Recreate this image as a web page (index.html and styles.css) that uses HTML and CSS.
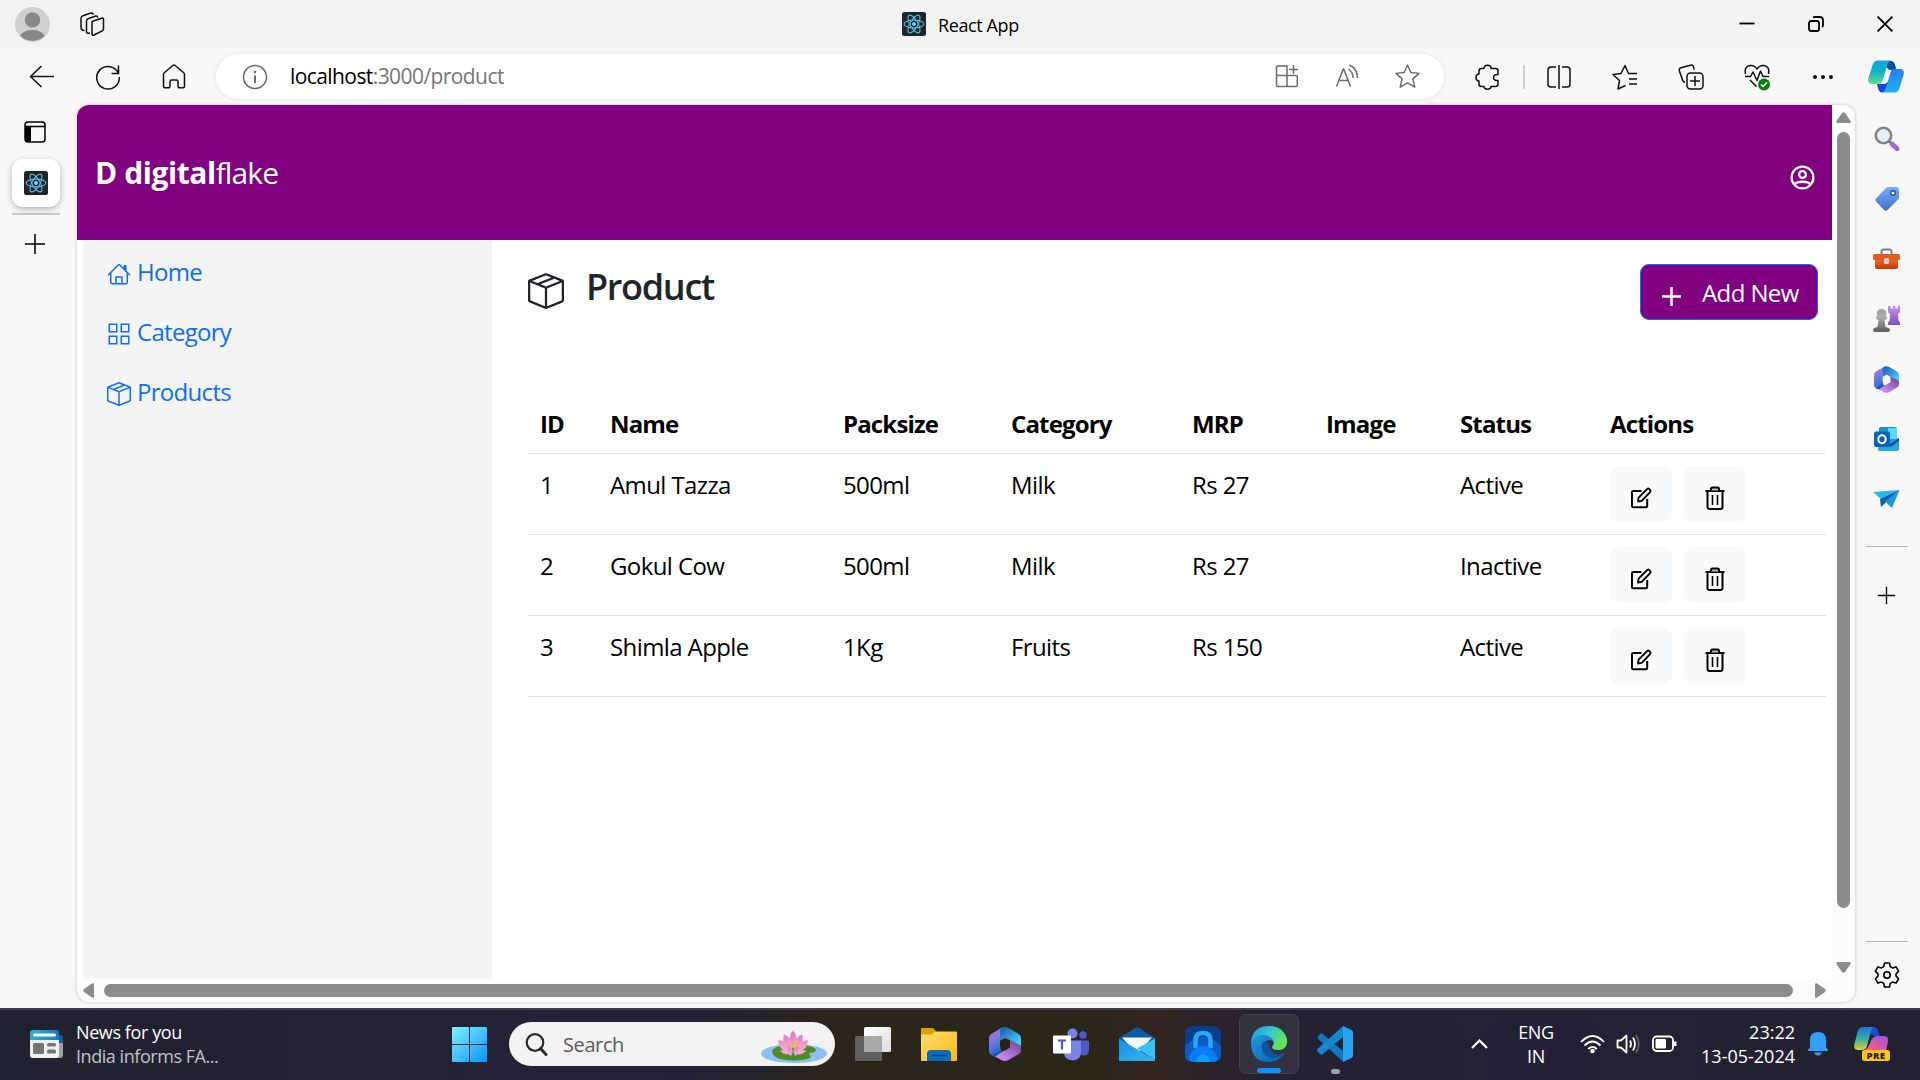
FILE: index.html
```html
<!DOCTYPE html>
<html lang="en">
<head>
<meta charset="utf-8">
<title>React App</title>
<link rel="stylesheet" href="styles.css">
</head>
<body>
<svg class="defs" width="0" height="0">
  <defs>
    <linearGradient id="g-win" x1="0" y1="0" x2="1" y2="1"><stop offset="0" stop-color="#7df3ff"/><stop offset="1" stop-color="#0a93ff"/></linearGradient>
    <linearGradient id="g-a" x1="0" y1="0" x2="0" y2="1"><stop offset="0" stop-color="#0aa5e8"/><stop offset=".5" stop-color="#14b2c4"/><stop offset="1" stop-color="#5be08a"/></linearGradient>
    <linearGradient id="g-b" x1="0" y1="0" x2="0" y2="1"><stop offset="0" stop-color="#2b7be8"/><stop offset="1" stop-color="#18b4fa"/></linearGradient>
    <linearGradient id="g-p" x1="0" y1="0" x2=".3" y2="1"><stop offset="0" stop-color="#b57ae0"/><stop offset=".6" stop-color="#6a78e0"/><stop offset="1" stop-color="#1c6cc8"/></linearGradient>
    <linearGradient id="g-q" x1="0" y1="0" x2="1" y2="1"><stop offset="0" stop-color="#1c55b8"/><stop offset="1" stop-color="#4ee0ff"/></linearGradient>
    <linearGradient id="g-r" x1="0" y1="1" x2="1" y2="0"><stop offset="0" stop-color="#e49aff"/><stop offset="1" stop-color="#6a4296"/></linearGradient>
    <linearGradient id="g-tag" x1="0" y1="0" x2="0" y2="1"><stop offset="0" stop-color="#75b0f5"/><stop offset="1" stop-color="#4470d0"/></linearGradient>
    <linearGradient id="g-box" x1="0" y1="0" x2="0" y2="1"><stop offset="0" stop-color="#f07030"/><stop offset="1" stop-color="#c8380c"/></linearGradient>
    <linearGradient id="g-rook" x1="0" y1="0" x2="0" y2="1"><stop offset="0" stop-color="#c490f0"/><stop offset="1" stop-color="#7a52b8"/></linearGradient>
    <linearGradient id="g-pawn" x1="0" y1="0" x2="0" y2="1"><stop offset="0" stop-color="#b4b4b4"/><stop offset="1" stop-color="#5c5c5c"/></linearGradient>
    <linearGradient id="g-fold" x1="0" y1="0" x2="1" y2="1"><stop offset="0" stop-color="#ffdc70"/><stop offset="1" stop-color="#fdbb14"/></linearGradient>
    <linearGradient id="g-edge" x1="0" y1="0" x2="1" y2=".5"><stop offset="0" stop-color="#2290dc"/><stop offset=".5" stop-color="#34c4d4"/><stop offset="1" stop-color="#62e84e"/></linearGradient>
    <linearGradient id="g-edge2" x1="0" y1="0" x2="1" y2="1"><stop offset="0" stop-color="#1a9be6"/><stop offset="1" stop-color="#0b5cb0"/></linearGradient>
    <linearGradient id="g-mail" x1="0" y1="0" x2="1" y2="1"><stop offset="0" stop-color="#1d8ce0"/><stop offset="1" stop-color="#33b8f0"/></linearGradient>
    <linearGradient id="g-cp1" x1="0" y1="0" x2="0" y2="1"><stop offset="0" stop-color="#1a74e8"/><stop offset=".55" stop-color="#3db59a"/><stop offset="1" stop-color="#d8d42c"/></linearGradient>
    <linearGradient id="g-cp2" x1="1" y1="0" x2="0" y2="1"><stop offset="0" stop-color="#a04cf0"/><stop offset="1" stop-color="#ff6a5c"/></linearGradient>
    <linearGradient id="g-petal" x1="0" y1="0" x2="0" y2="1"><stop offset="0" stop-color="#d277c8"/><stop offset="1" stop-color="#ffb4d8"/></linearGradient>
    <linearGradient id="g-news" x1="0" y1="0" x2="1" y2="0"><stop offset="0" stop-color="#2bb5cc"/><stop offset="1" stop-color="#1878cc"/></linearGradient>
    <linearGradient id="g-tv" x1="0" y1="0" x2="1" y2="1"><stop offset="0" stop-color="#fff"/><stop offset="1" stop-color="#dcdcdc"/></linearGradient>
  </defs>
  <symbol id="react" viewBox="0 0 24 24">
    <rect width="24" height="24" rx="2.5" fill="#20232a"/>
    <g fill="none" stroke="#53c1de" stroke-width="1.1">
      <ellipse cx="12" cy="12" rx="10" ry="3.9"/>
      <ellipse cx="12" cy="12" rx="10" ry="3.9" transform="rotate(60 12 12)"/>
      <ellipse cx="12" cy="12" rx="10" ry="3.9" transform="rotate(120 12 12)"/>
    </g>
    <circle cx="12" cy="12" r="2" fill="#61dafb"/>
  </symbol>
  <symbol id="box" viewBox="0 0 16 16">
    <path fill="currentColor" d="M8.186 1.113a.5.5 0 0 0-.372 0L1.846 3.5l2.404.961L10.404 2zm3.564 1.426L5.596 5 8 5.961 14.154 3.5zm3.25 1.7-6.5 2.6v7.922l6.5-2.6V4.24zM7.5 14.762V6.838L1 4.239v7.923zM7.443.184a1.5 1.5 0 0 1 1.114 0l7.129 2.852A.5.5 0 0 1 16 3.5v8.662a1 1 0 0 1-.629.928l-7.185 2.874a.5.5 0 0 1-.372 0L.63 13.09a1 1 0 0 1-.63-.928V3.5a.5.5 0 0 1 .314-.464z"/>
  </symbol>
  <symbol id="m365" viewBox="0 0 32 34">
    <path fill="url(#g-p)" d="M14 0 3 6.500Q0 8 0 11v13q0 3 3 4.500l5 1 4-6-1-5V11z"/>
    <path fill="url(#g-q)" d="M13 .8q3-1.500 6 0l10 5.700q3 1.500 3 5V20L20.500 13 16 11l-5 2.500V5q0-3 2-4.200z"/>
    <path fill="url(#g-r)" d="M32 19v4q0 3-3 4.500L19 33.200q-3 1.500-6 0L5 29l7-4 4-1.500 5-3V13l9 4.500q1.500.8 2 1.500z"/>
    <path fill="#1455a8" d="m3 28.500 8.500-5 2 .9-6.500 4.600q-2 .8-4-.5z"/>
  </symbol>
  <symbol id="edit" viewBox="0 0 24 24" fill="none" stroke="#000" stroke-width="2" stroke-linejoin="round">
    <path d="M12.500 5H4.200Q3 5 3 6.200V20q0 1.200 1.200 1.200H17q1.200 0 1.200-1.200v-7"/>
    <path d="m9 15.500.6-3.800L18.200 3q1-.9 2 0l1 1q.9 1 0 2l-8.500 8.800z" stroke-width="1.800"/>
  </symbol>
  <symbol id="trash" viewBox="0 0 24 24" fill="none" stroke="#000" stroke-width="2">
    <path d="M2.500 5h19"/><path d="M8 4.500V3q0-1.500 1.500-1.500h5Q16 1.500 16 3v1.500" fill="#bbb"/>
    <path d="M4.500 5v16q0 2 2 2h11q2 0 2-2V5"/><path d="M9.500 9v10M14.500 9v10" stroke-width="1.600"/>
  </symbol>
  <symbol id="plus" viewBox="0 0 24 24"><path d="M12 1v22M1 12h22" stroke="currentColor" stroke-width="1.700" fill="none"/></symbol>
  <symbol id="star" viewBox="0 0 24 24"><path fill="none" stroke="currentColor" stroke-width="1.400" stroke-linejoin="round" d="m12 1 3.200 7.200 7.900.8-5.900 5.300 1.800 7.900-7-4-7 4 1.800-7.900L.9 9l7.900-.8z"/></symbol>
</svg>

<div class="titlebar">
  <div class="title-left">
    <svg class="avatar" viewBox="0 0 34 34"><circle cx="17" cy="17" r="17" fill="#d2d0ce"/><circle cx="17" cy="12.500" r="7.500" fill="#8a8886"/><path d="M5 28a13 9 0 0 1 24 0 17 17 0 0 1-24 0z" fill="#8a8886"/></svg>
    <svg width="25" height="25" viewBox="0 0 25 25" fill="none" stroke="#111" stroke-width="1.500" stroke-linejoin="round"><path d="m12 9.500 9.500-3.300q2-.6 2 1.300v9.500q0 1.300-1.200 1.800L14 23q-2 .8-2-1.300z"/><path d="M9.500 21q-3 .8-3-1.200V9q0-1.600 1.500-2.200l7-2.600q2-.6 2.600.8M4 18.500Q1 18 1 15.500v-9q0-2 2-2.700l7-2.500q2-.7 3.200.7" stroke-linecap="round"/></svg>
  </div>
  <div class="title-center"><svg width="24" height="24"><use href="#react"/></svg><span>React App</span></div>
  <div class="window-buttons">
    <svg viewBox="0 0 16 16"><path d="M.5 7.500h15"/></svg>
    <svg viewBox="0 0 16 16"><rect x="1" y="5" width="10" height="10" rx="2"/><path d="M5 1.500Q6 1 7 1h4.500Q15 1 15 4.500V9q0 1.200-.8 2"/></svg>
    <svg viewBox="0 0 16 16"><path d="m.6.600 14.800 14.800M15.400.6.600 15.400"/></svg>
  </div>
</div>

<div class="toolbar">
  <div class="tool"><svg width="26" height="26" viewBox="0 0 26 26"><path d="M12.500 2 1.500 12.500l11 10.500M1.500 12.500H25"/></svg></div>
  <div class="tool"><svg width="26" height="26" viewBox="0 0 26 26"><path d="M23.500 9.500A11.300 11.300 0 1 0 24.300 13M23.500 1.500v8h-7"/></svg></div>
  <div class="tool"><svg width="24" height="26" viewBox="0 0 24 26"><path stroke-linejoin="round" d="M1.500 10.500Q1.500 9.500 2.300 8.800L10.800 1.500q1.200-1 2.400 0l8.500 7.300q.8.700.8 1.700V22q0 1.800-1.800 1.800h-3Q16 23.800 16 22v-4.500Q16 16 14.500 16h-5Q8 16 8 17.500V22q0 1.800-1.700 1.800h-3Q1.500 23.800 1.500 22z"/></svg></div>
  <div class="address">
    <svg width="26" height="26" viewBox="0 0 26 26"><circle cx="13" cy="13" r="11.500"/><path d="M13 11.500v7.500" stroke-width="2"/><circle cx="13" cy="8" r="1.300" fill="#6b6b6b" stroke="none"/></svg>
    <div class="url"><b>localhost</b>:3000/product</div>
    <div class="address-icons">
      <svg width="24" height="24" viewBox="0 0 24 24"><path d="M2.800 2H12v9.500h9q1.300 0 1.300 1.300v8.400q0 1.300-1.300 1.300H2.800q-1.300 0-1.300-1.300V3.300Q1.500 2 2.800 2zM1.500 11.500H12v11M18.500 1v9M14 5.500h9"/></svg>
      <svg width="24" height="24" viewBox="0 0 24 24"><path d="M1.500 22.500 8.300 5h.4l6.800 17.500M4 16.500h9M13.500 5q4.500 3.200 4.700 9M14.500 1q8 4 8 13"/></svg>
      <svg width="25" height="25"><use href="#star"/></svg>
    </div>
  </div>
  <div class="tool ext"><svg width="26" height="26" viewBox="0 0 26 26"><path stroke-linejoin="round" d="M9 4.500q0-3.200 3.500-3.200T16 4.500h4.500q2.500 0 2.500 2.500v3.500q-4.500-.3-4.500 3t4.500 3V20q0 2.500-2.500 2.500H16q0 2.700-3.500 2.700T9 22.500H6.500Q4 22.500 4 20v-3q-3-.2-3-3.500T4 10V7q0-2.500 2.500-2.500z"/></svg></div>
  <div class="divider"></div>
  <div class="tool"><svg width="24" height="26" viewBox="0 0 24 26"><path d="M9 3H4Q1 3 1 6v14q0 3 3 3h5M15 3h5q3 0 3 3v14q0 3-3 3h-5M12 1v24"/></svg></div>
  <div class="tool"><svg width="26" height="26" viewBox="0 0 26 26"><path stroke-linejoin="round" d="m13.500 21.500-7.500 3.500 1.500-8.500L1 10.500l8-1 4-8 3.500 8H25M17 15h8M17 20h8"/></svg></div>
  <div class="tool"><svg width="26" height="26" viewBox="0 0 26 26"><rect x="9" y="9" width="16" height="16" rx="3.500"/><path d="M17 12v10M12 17h10M7 18.500Q5 17.500 4.500 16L1.300 6.500Q.8 4.500 3 3.700l9.500-2.500q2.500-.5 3 1.500l.7 3"/></svg></div>
  <div class="tool"><svg width="26" height="28" viewBox="0 0 26 28"><path stroke-linejoin="round" d="M1.500 11Q0 3.500 6 2.500q4.500-.5 7 3.500 2.500-4 7-3.500 6 1 4.500 8.500M1 13.500h5.500L9 9l4 8.500L16.500 8l2.500 5.500h6M6 17l6.500 6.500"/><circle cx="20" cy="21.500" r="6" fill="#107c10" stroke="none"/><path d="m17 21.500 2 2 4-4" stroke="#fff"/></svg></div>
  <div class="tool"><svg width="22" height="6" viewBox="0 0 22 6"><g fill="#111" stroke="none"><circle cx="3" cy="3" r="2"/><circle cx="11" cy="3" r="2"/><circle cx="19" cy="3" r="2"/></g></svg></div>
  <div class="tool copilot"><svg width="36" height="33" viewBox="0 0 36 33"><path fill="#0b4fa0" d="M19 1h4q3 0 4 4l1.500 5h-7L17 6z"/><path fill="#1c48d8" d="M9 24h8l4-3-3 9q-1 2.500-4 2.500-2.500 0-3.500-3z"/><path fill="url(#g-a)" d="M10 .5h13q-3 1-4 5l-4 14q-1.300 4.500-6 4.500H4q-5 0-3.500-6l4-13Q6 .5 10 .5z"/><path fill="url(#g-b)" d="M26 9h6q5 0 3.500 6l-4 13q-1.500 4.500-5.500 4.500H14q3-1 4-4.500l4-14q1.200-5 4-5z"/></svg></div>
</div>

<div class="main">
  <div class="tabs">
    <svg class="tab-toggle" viewBox="0 0 22 22"><rect x="1" y="1" width="20" height="20" rx="3" fill="none" stroke="#000" stroke-width="1.500"/><path d="M1 5.500h20" stroke="#000" stroke-width="1.500"/><path d="M1 5.500h6V21H4q-3 0-3-3z"/></svg>
    <div class="tab"><svg width="24" height="24"><use href="#react"/></svg></div>
    <div class="tab-line"></div>
    <svg class="tab-add"><use href="#plus"/></svg>
  </div>

  <div class="frame">
    <div class="page">
      <header class="app-header">
        <div class="brand"><b>D digital</b><span>flake</span></div>
        <svg width="29" height="29" viewBox="0 0 24 24" fill="none" stroke="#fff" stroke-width="1.900"><circle cx="12" cy="12" r="9"/><circle cx="12" cy="9.500" r="2.800"/><path d="M5.500 18q1-2.500 6.500-2.500t6.500 2.500"/></svg>
      </header>
      <div class="app-body">
        <nav class="side">
          <a><svg width="24" height="24" viewBox="0 0 16 16"><path fill="currentColor" d="M8.707 1.500a1 1 0 0 0-1.414 0L.646 8.146a.5.5 0 0 0 .708.708L2 8.207V13.500A1.500 1.500 0 0 0 3.500 15h9a1.500 1.500 0 0 0 1.500-1.500V8.207l.646.647a.5.5 0 0 0 .708-.708L13 5.793V2.500a.5.5 0 0 0-.5-.5h-1a.5.5 0 0 0-.5.500v1.293zM13 7.207V13.500a.5.5 0 0 1-.5.500H10.500V10a.5.500 0 0 0-.5-.5H6a.5.500 0 0 0-.5.500v4H3.500a.5.500 0 0 1-.5-.5V7.207l5-5zM6.500 14v-3.500h3V14z"/></svg><span>Home</span></a>
          <a><svg width="24" height="24" viewBox="0 0 16 16"><path fill="none" stroke="currentColor" d="M1.500 1.500h5v5h-5zM9.500 1.500h5v5h-5zM1.500 9.500h5v5h-5zM9.500 9.500h5v5h-5z"/></svg><span>Category</span></a>
          <a><svg width="24" height="24"><use href="#box"/></svg><span>Products</span></a>
        </nav>
        <main class="content">
          <div class="content-head">
            <svg width="36" height="36"><use href="#box"/></svg>
            <h1>Product</h1>
            <button class="add"><svg width="21" height="21" viewBox="0 0 21 21"><path d="M10.500 1v19M1 10.500h19" stroke="#fff" stroke-width="2.500"/></svg><span>Add New</span></button>
          </div>
          <table>
            <colgroup><col class="c1"><col class="c2"><col class="c3"><col class="c4"><col class="c5"><col class="c6"><col class="c7"><col></colgroup>
            <thead><tr><th>ID</th><th>Name</th><th>Packsize</th><th>Category</th><th>MRP</th><th>Image</th><th>Status</th><th>Actions</th></tr></thead>
            <tbody>
              <tr><td>1</td><td>Amul Tazza</td><td>500ml</td><td>Milk</td><td>Rs 27</td><td></td><td>Active</td><td><div class="actions"><button><svg><use href="#edit"/></svg></button><button><svg><use href="#trash"/></svg></button></div></td></tr>
              <tr><td>2</td><td>Gokul Cow</td><td>500ml</td><td>Milk</td><td>Rs 27</td><td></td><td>Inactive</td><td><div class="actions"><button><svg><use href="#edit"/></svg></button><button><svg><use href="#trash"/></svg></button></div></td></tr>
              <tr><td>3</td><td>Shimla Apple</td><td>1Kg</td><td>Fruits</td><td>Rs 150</td><td></td><td>Active</td><td><div class="actions"><button><svg><use href="#edit"/></svg></button><button><svg><use href="#trash"/></svg></button></div></td></tr>
            </tbody>
          </table>
        </main>
      </div>
    </div>
    <div class="vscroll">
      <svg width="15" height="11" viewBox="0 0 15 11"><path d="M6 1q1.500-1.600 3 0l5.500 8q.8 2-1 2h-12q-1.800 0-1-2z"/></svg>
      <div class="vthumb"></div>
      <svg width="15" height="11" viewBox="0 0 15 11"><path d="M6 10q1.500 1.600 3 0l5.500-8q.8-2-1-2h-12Q-.3 0 .5 2z"/></svg>
    </div>
    <div class="hscroll">
      <svg width="11" height="15" viewBox="0 0 11 15"><path d="M1 6q-1.600 1.500 0 3l8 5.500q2 .8 2-1v-12q0-1.800-2-1z"/></svg>
      <div class="hthumb"></div>
      <svg width="11" height="15" viewBox="0 0 11 15"><path d="M10 6q1.600 1.500 0 3l-8 5.500q-2 .8-2-1v-12Q0-.3 2 .5z"/></svg>
    </div>
  </div>

  <aside class="rail">
    <div class="rail-item"><svg width="26" height="26" viewBox="0 0 26 26"><circle cx="9.500" cy="9.500" r="7.700" fill="#e8eef2" stroke="#828282" stroke-width="2.600"/><path d="m15 15 3 3" stroke="#777" stroke-width="2.500"/><path d="m18.500 18.500 4.500 4" stroke="#9a68cc" stroke-width="5" stroke-linecap="round"/></svg></div>
    <div class="rail-item"><svg width="26" height="26" viewBox="0 0 26 26"><path fill="url(#g-tag)" d="M12 2q1-1 2.500-1H22q3 0 3 3v7q0 1.500-1 2.500L13.500 24q-1.700 1.500-3.500 0l-8-8.500q-1.500-1.700 0-3z"/><circle cx="19" cy="7" r="2.300" fill="#fff" stroke="#234a94" stroke-width="1.400"/></svg></div>
    <div class="rail-item"><svg width="27" height="26" viewBox="0 0 27 26"><path d="M8.500 9V5.500Q8.500 3.500 10.500 3.500h6q2 0 2 2V9" fill="none" stroke="#808080" stroke-width="2"/><path fill="url(#g-box)" d="M2 12h23v9q0 2-2 2H4q-2 0-2-2z"/><rect y="8" width="27" height="6" rx="1.500" fill="#e55a1e"/><rect x="11" y="12" width="5" height="6" rx="1.500" fill="#d0d0d0"/></svg></div>
    <div class="rail-item"><svg width="27" height="28" viewBox="0 0 27 28"><path fill="url(#g-rook)" d="M15 1h2.500v2.500H20V1h2.500v2.500H25V1h2v6l-2 2 .5 7 1.500 1v3H15v-3l1.500-1 .5-7-2-2z"/><circle cx="8.500" cy="8.500" r="4.800" fill="#a6a6a6"/><path fill="url(#g-pawn)" d="M3 12q0-1.500 5.500-1.500T14 12q0 3-2.500 3l1 7q4.500 1 4.500 3t-2 2H2q-2 0-2-2t4.500-3l1-7Q3 15 3 12z"/></svg></div>
    <div class="rail-item"><svg width="25" height="27"><use href="#m365"/></svg></div>
    <div class="rail-item"><svg width="25" height="25" viewBox="0 0 25 25"><path fill="#1590dc" d="M5 2q0-2 2-2h14q2 0 2 2v14H5z"/><path fill="#50d9ff" d="M14 1h9v11h-9z"/><path fill="#28a8ea" d="m4 20 10-5 11-4v11q0 2-2 2H6q-2 0-2-2z"/><path fill="#135298" d="m14 18 11-7v3l-8 6z"/><rect y="4.500" width="16" height="15.500" rx="2" fill="#0364b8"/><ellipse cx="8" cy="12.200" rx="3.700" ry="4" fill="none" stroke="#fff" stroke-width="2"/></svg></div>
    <div class="rail-item"><svg width="27" height="19" viewBox="0 0 27 19"><path fill="#29b6e8" d="M0 2 26.500 0 9 10z"/><path fill="#1060a8" d="m7 9 19.500-9L8 17z"/><path fill="#1a96dc" d="M26.500 0 19 18l-7-6.500z"/></svg></div>
    <div class="rail-line"></div>
    <div class="rail-add"><svg width="19" height="19"><use href="#plus"/></svg></div>
    <div class="rail-bottom">
      <div class="rail-line"></div>
      <svg width="26" height="26" viewBox="0 0 26 26" fill="none" stroke="#000" stroke-width="1.600" stroke-linejoin="round"><path d="M10.500 1h5l.8 3.600 2.200 1.300 3.600-1 2.500 4.200L22 12v2l2.600 2.900-2.500 4.200-3.600-1-2.200 1.300-.8 3.600h-5l-.8-3.600-2.200-1.300-3.600 1-2.500-4.200L4 14v-2L1.400 9.100l2.500-4.200 3.600 1 2.200-1.300z"/><circle cx="13" cy="13" r="3.200"/></svg>
    </div>
  </aside>
</div>

<footer class="taskbar">
  <div class="news">
    <svg width="34" height="28" viewBox="0 0 34 28"><path fill="#0c5fa8" d="M26 5h4q3 0 3 3v5h-7z"/><path fill="#a0a0a0" d="M26 13h7v12q0 3-3 3h-4z"/><path fill="#f0f0f0" d="M0 9h29v16q0 3-3 3H3q-3 0-3-3z"/><path fill="url(#g-news)" d="M3 0h23q3 0 3 3v7H0V3q0-3 3-3z"/><rect x="3" y="3.500" width="23" height="3" rx="1.500" fill="#fff"/><rect x="3" y="13" width="11" height="11" rx="1.500" fill="#757575"/><rect x="17" y="13" width="9" height="3.500" rx="1.500" fill="#757575"/><rect x="17" y="19.500" width="9" height="4" rx="1.500" fill="#757575"/></svg>
    <div class="news-text"><div>News for you</div><div class="dim">India informs FA...</div></div>
  </div>
  <div class="apps">
    <div class="app"><svg width="35" height="35" viewBox="0 0 35 35"><path fill="url(#g-win)" d="M1 0h16v17H0V1q0-1 1-1zM18 0h16q1 0 1 1v16H18zM0 18h17v17H1q-1 0-1-1zM18 18h17v16q0 1-1 1H18z"/></svg></div>
    <div class="search">
      <svg width="23" height="23" viewBox="0 0 23 23"><circle cx="10" cy="9.500" r="8.300" fill="none" stroke="#2a2a2a" stroke-width="2.200"/><path d="m15.500 15.500 5.500 6" stroke="#2a2a2a" stroke-width="3" stroke-linecap="round"/></svg>
      <span>Search</span>
      <svg class="lotus" width="66" height="33" viewBox="0 0 66 33"><ellipse cx="33" cy="23.500" rx="33" ry="9.500" fill="#8cc0f4"/><path d="M11 21q2-6 22-6 22 0 22 5.500-1 2-7 2.500l2 4.500q-5 3-19 3-20-1-20-9.500z" fill="#4c8c22"/><g transform="translate(5 2) scale(.82)" fill="url(#g-petal)" stroke="#f3a0d2" stroke-width=".5"><path d="M33-2q6 8 4 20h-8Q27 6 33-2zM22 3q8 2 10 17h-6Q19 12 22 3zM44 3q-8 2-10 17h6q7-8 4-17zM15 10q10 0 15 14-14 0-15-14zM51 10q-10 0-15 14 14 0 15-14zM17 23q8-3 14 2-7 5-14-2zM49 23q-8-3-14 2 7 5 14-2z"/><path d="M27 17q9 4 3 12-6-4-3-12zM39 17q-9 4-3 12 6-4 3-12z"/></g><path d="M28 11q4 1 4 6 1-5 5-6 0 7-4 7-4 0-5-7z" fill="#f4b53c"/></svg>
    </div>
    <div class="app"><svg width="36" height="34" viewBox="0 0 36 34"><rect x="9" width="27" height="25" rx="1.500" fill="url(#g-tv)"/><rect y="9" width="27" height="25" rx="1.500" fill="#606060"/><path fill="#a9a9a9" d="M9 9h18v16H9z"/></svg></div>
    <div class="app"><svg width="36" height="33" viewBox="0 0 36 33"><path fill="#e0a000" d="M0 1q0-1 1-1h10q2 0 4 4l3 6H0z"/><path fill="url(#g-fold)" d="M0 6.500h11L14 3.500h21q1 0 1 1V32q0 1-1 1H1q-1 0-1-1z"/><path fill="#0c6cb8" d="M6 33v-7q0-4 4-4h16q4 0 4 4v7z"/><path d="M10.500 27.500h15" stroke="#084a86" stroke-width="1.600"/></svg></div>
    <div class="app"><svg width="32" height="34"><use href="#m365"/></svg></div>
    <div class="app"><svg width="36" height="33" viewBox="0 0 36 33"><circle cx="19.500" cy="5.500" r="5" fill="#7b83eb"/><circle cx="30" cy="7" r="3.800" fill="#5059c9"/><path fill="#5059c9" d="M27 12.500h8q1 0 1 1V22q0 5-5 5.500-5-.5-5-5.500z"/><path fill="#7b83eb" d="M11 12.500h17V24q0 8-8.500 8.500Q11 32 11 24z"/><rect y="7.500" width="18" height="18" rx="1" fill="#fff"/><path d="M5 12.500h8M9 12.500v9" stroke="#5059c9" stroke-width="2.200"/></svg></div>
    <div class="app"><svg width="36" height="34" viewBox="0 0 36 34"><path fill="#0a5aa8" d="M0 11 16 1q2-1.300 4 0l16 10v10H0z"/><path fill="#f4f4f4" d="M3 10.500h30L21 24h-6z"/><path fill="#37c2f4" d="M36 11.500V33L18 21.500z"/><path fill="url(#g-mail)" d="M0 11.500 36 33q0 1-1 1H1q-1 0-1-1z"/></svg></div>
    <div class="app"><svg width="36" height="36" viewBox="0 0 36 36"><rect width="36" height="36" rx="8" fill="#063f8a"/><path d="M0 20q9-9 18-9t18 9v8q0 8-8 8H8q-8 0-8-8z" fill="#0a5cc0"/><path d="M10.500 22v-8q0-7 7.500-7t7.500 7v8" fill="none" stroke="#2aa4ff" stroke-width="4.500"/><path d="M4 34a14 14 0 0 1 28 0q-2 2-4 2H8q-2 0-4-2z" fill="#0a7cf4"/><path d="M11 36a7 7.500 0 0 1 14 0z" fill="#0c9cff"/></svg></div>
    <div class="app active"><svg width="36" height="36" viewBox="0 0 36 36"><path fill="url(#g-edge2)" d="M0 16Q3 8 13 8q10 0 10 8-5-4-9 0-3 6 3 11 7 5 16 0-5 9-15 9Q1 36 0 18z"/><path fill="#10529c" d="M13 15q-5 8 1 14 8 6 19 0 1-.5.500-1-8 2-13-3-3-3-2-7z"/><path fill="url(#g-edge)" d="M0 17Q1 0 18 0q14 0 18 13 1 11-9 11-6 0-6-3 3-3 1-7-3-5-10-5Q4 9 0 17z"/></svg></div>
    <div class="app running"><svg width="36" height="36" viewBox="0 0 36 36"><path fill="#0d78c0" d="m2 9 2.500-2 22 18.500V36L.500 12.500Q0 11 2 9z"/><path fill="#1287cc" d="M4.500 29 .5 25.500q-1-1.500.5-3L26 0v11z"/><path fill="#2aa2f2" d="m26 0 8.500 4q1.500.8 1.500 2.500v23q0 1.700-1.500 2.500L26 36z"/></svg></div>
  </div>
  <div class="tray">
    <svg class="chev" width="17" height="10" viewBox="0 0 17 10"><path d="m1 9 7.500-7.500L16 9"/></svg>
    <div class="lang">ENG<br>IN</div>
    <svg width="25" height="20" viewBox="0 0 25 20"><path d="M1 8q11.500-12 23 0M4.500 11.500q8-8 16 0M8.200 15q4.300-4.200 8.600 0"/><circle cx="12.500" cy="17" r="2.300" fill="#fff" stroke="none"/></svg>
    <svg width="25" height="20" viewBox="0 0 25 20"><path stroke-linejoin="round" d="M1.500 6.500H5L10.500 1.500v17L5 13.500H1.500zM14 6.500q2 3.500 0 7M17 3.500q4 6.500 0 13"/><path d="M20 1q5.500 9 0 18" stroke="#666"/></svg>
    <svg width="25" height="20" viewBox="0 0 25 20"><rect x="1" y="2.500" width="20" height="14.500" rx="3.500"/><rect x="3.500" y="5" width="10.500" height="9.500" rx="1" fill="#fff" stroke="none"/><path d="M23 7.500v4.500" stroke-width="3"/></svg>
    <div class="clock">23:22<br>13-05-2024</div>
    <svg class="bell" width="20" height="24" viewBox="0 0 20 24"><path fill="#2ea0ff" stroke="none" d="M2 15V8q0-8 8-8t8 8v7l2 3v1H0v-1zM6 20.500h8Q13 23.500 10 23.500T6 20.500z"/></svg>
    <svg class="pre" width="36" height="34" viewBox="0 0 36 34"><path fill="#1a4cd8" d="M17 0h3q3 0 4 4l2 5h-6l-4-3z"/><path fill="url(#g-cp1)" d="M9 0h11q-2 1-3 4l-4 15q-1 4-5 4H4q-5 0-3.500-6l3-12Q5 0 9 0z"/><path fill="url(#g-cp2)" d="M24 9h6q5 0 4 6l-2 9H7q6 0 9-8 2-7 8-7z"/><rect x="8" y="23" width="28" height="11" rx="2.500" fill="#ffc40c"/><text x="22" y="32" text-anchor="middle">PRE</text></svg>
  </div>
</footer>
</body>
</html>
```
FILE: styles.css
```css
* { box-sizing: border-box; }
body { margin: 0; width: 1920px; height: 1080px; overflow: hidden; background: #f7f7f7; font-family: "Open Sans", "Noto Sans", sans-serif; color: #000; display: flex; flex-direction: column; }
svg { display: block; flex: none; }
.defs { position: absolute; }
button { font: inherit; }

.titlebar { height: 48px; flex: none; background: #f2f2f2; display: flex; align-items: center; }
.title-left { width: 902px; flex: none; display: flex; align-items: center; gap: 30px; padding-left: 15px; }
.avatar { width: 35px; height: 35px; }
.title-center { display: flex; align-items: center; gap: 12px; font-size: 18px; letter-spacing: -.4px; width: 200px; flex: none; }
.title-center span { padding-top: 2px; }
.window-buttons { width: 818px; display: flex; justify-content: flex-end; gap: 53px; padding-right: 27px; }
.window-buttons svg { width: 16px; height: 16px; fill: none; stroke: #000; stroke-width: 1.8; }

.toolbar { height: 57px; flex: none; display: flex; align-items: center; padding-left: 9px; }
.tool { width: 66px; display: flex; justify-content: center; flex: none; }
.toolbar svg { fill: none; stroke: #111; stroke-width: 1.5; }
.toolbar .ext { padding-left: 2px; }
.toolbar .copilot { width: 60px; }
.toolbar .copilot svg { stroke: none; }
.address { width: 1228px; height: 45px; margin: 0 10px 0 9px; border-radius: 23px; background: #fff; box-shadow: 0 0 5px rgba(0,0,0,.09); display: flex; align-items: center; padding: 0 24px 0 26px; }
.address svg { stroke: #6b6b6b; color: #6b6b6b; }
.url { font-size: 21px; color: #767676; margin-left: 22px; flex: 1; letter-spacing: -.58px; padding-bottom: 2px; }
.url b { font-weight: 400; color: #000; }
.address-icons { display: flex; gap: 36px; }
.divider { width: 2px; height: 24px; background: #cfcfcf; margin: 0 1px 0 3px; }

.main { height: 903px; flex: none; display: flex; }
.tabs { width: 77px; display: flex; flex-direction: column; }
.tab-toggle { width: 22px; height: 22px; margin: 16px 0 0 24px; }
.tab { width: 48px; height: 48px; margin: 16px 0 0 12px; border-radius: 11px; background: #fff; box-shadow: 0 2px 6px rgba(0,0,0,.28); display: grid; place-items: center; }
.tab-line { width: 48px; height: 2px; margin: 6px 0 0 12px; background: #c6c6c6; }
.tab-add { width: 22px; height: 22px; margin: 18px 0 0 24px; }

.frame { width: 1778px; height: 897px; border-radius: 12px; overflow: hidden; background: #fcfcfc; box-shadow: 0 0 3px 1px rgba(0,0,0,.13); display: grid; grid-template-columns: 1755px 23px; grid-template-rows: 874px 23px; }
.page { background: #fff; overflow: hidden; }
.app-header { height: 135px; background: #800080; color: #fff; display: flex; justify-content: space-between; align-items: center; padding: 0 15px 0 18px; }
.brand { font-size: 30px; line-height: 40px; letter-spacing: -.9px; }
.brand b { letter-spacing: -.43px; }
.app-header svg { margin-top: 9px; }
.app-body { display: flex; height: 739px; padding-left: 6px; }
.side { width: 409px; flex: none; background: #f4f4f4; padding: 13px 0 0 24px; font-size: 24px; letter-spacing: -.7px; color: #0d6efd; }
.side a { display: flex; align-items: center; gap: 6px; height: 36px; margin-bottom: 24px; }
.side svg { margin-top: 5px; }
.content { flex: 1; padding: 24px 6px 0 36px; }
.content-head { height: 56px; display: flex; align-items: center; color: #212529; padding-right: 8px; }
.content-head > svg { margin-top: -2px; }
.content-head h1 { margin: -11px auto 0 22px; font-size: 36px; font-weight: 600; line-height: 43px; letter-spacing: -1.3px; }
.add { width: 178px; height: 56px; border: 1.500px solid #0d6efd; border-radius: 9px; background: #800080; color: #fff; font-size: 24px; letter-spacing: -.6px; display: flex; align-items: center; padding: 1px 0 0 20px; gap: 20px; }
.add svg { margin-top: 7px; }
table { width: 1298px; margin-top: 79px; table-layout: fixed; border-collapse: collapse; font-size: 24px; line-height: 36px; letter-spacing: -.6px; }
.c1 { width: 70px; } .c2 { width: 233px; } .c3 { width: 168px; } .c4 { width: 181px; } .c5 { width: 134px; } .c6 { width: 134px; } .c7 { width: 150px; }
th, td { text-align: left; vertical-align: top; padding: 0 0 0 12px; border-bottom: 1px solid #dee2e6; }
th { height: 54px; padding-top: 7px; font-weight: 700; letter-spacing: -.85px; }
td { height: 81px; padding-top: 13px; }
.actions { display: flex; gap: 12px; margin-top: -1px; }
.actions button { width: 62px; height: 56px; border: 0; border-radius: 9px; background: #f8f9fa; padding: 8px 0 0; display: grid; place-items: center; }
.actions svg { width: 24px; height: 24px; }

.vscroll { display: flex; flex-direction: column; align-items: center; padding-top: 7px; fill: #8b8b8b; }
.vthumb { width: 13px; height: 776px; margin: 9px 0 54px; border-radius: 7px; background: #8b8b8b; flex: none; }
.hscroll { grid-column: 1 / 3; display: flex; align-items: center; padding-left: 6px; fill: #8b8b8b; }
.hthumb { width: 1689px; height: 13px; margin: 0 22px 0 10px; border-radius: 7px; background: #8b8b8b; }

.rail { width: 65px; display: flex; flex-direction: column; align-items: center; padding: 4px 2px 0 0; }
.rail-item { height: 60px; display: grid; place-items: center; }
.rail-line { width: 42px; height: 1px; background: #b4b4b4; margin-top: 17px; }
.rail-add { margin-top: 39px; }
.rail-bottom { margin-top: auto; padding-bottom: 20px; display: flex; flex-direction: column; align-items: center; gap: 20px; }

.taskbar { height: 72px; flex: none; border-top: 2px solid #403e4d; display: flex; align-items: center; padding-bottom: 2px; color: #fff; background: linear-gradient(90deg, #212230 0, #252136 28%, #242136 36%, #29261c 43%, #29271a 56%, #33251f 60%, #252133 66%, #242136 80%, #222230 100%); }
.news { width: 436px; flex: none; display: flex; align-items: center; padding-left: 30px; gap: 12px; font-size: 18px; line-height: 24px; letter-spacing: -.4px; }
.news-text { margin-top: -1px; }
.dim { color: #c2c2c8; letter-spacing: -.45px; }
.apps { display: flex; align-items: center; }
.app { width: 66px; height: 60px; display: grid; place-items: center; position: relative; flex: none; }
.search { width: 326px; height: 44px; border-radius: 22px; background: #f2f2f2; color: #5b5b5b; display: flex; align-items: center; margin: 0 5px 0 7px; padding: 0 8px 0 16px; font-size: 20px; letter-spacing: -.4px; }
.search span { margin-left: 15px; }
.lotus { margin: 5px 0 0 auto; }
.active { width: 60px; margin: 0 3px; background: #35323f; border: 1px solid #42404b; border-radius: 7px; }
.active::after, .running::after { content: ""; position: absolute; bottom: 0; left: 17px; width: 24px; height: 5px; border-radius: 3px; background: #0a90ff; }
.running::after { left: 29px; width: 9px; background: #a0a0a8; }
.tray { flex: 1; display: flex; align-items: center; font-size: 18px; line-height: 24px; letter-spacing: -.4px; padding-left: 103px; }
.tray svg { fill: none; stroke: #fff; stroke-width: 1.8; margin-right: 11px; }
.tray .chev { margin-right: 28px; stroke-width: 2.2; }
.lang { width: 40px; text-align: center; margin-right: 24px; }
.clock { width: 107px; text-align: right; margin-right: 13px; letter-spacing: 0; margin-top: -1px; }
.tray .bell { margin-right: 26px; }
.tray .pre { stroke: none; margin: 0; }
.pre text { font: 800 9.500px "Open Sans", sans-serif; letter-spacing: .5px; fill: #222; }
```
